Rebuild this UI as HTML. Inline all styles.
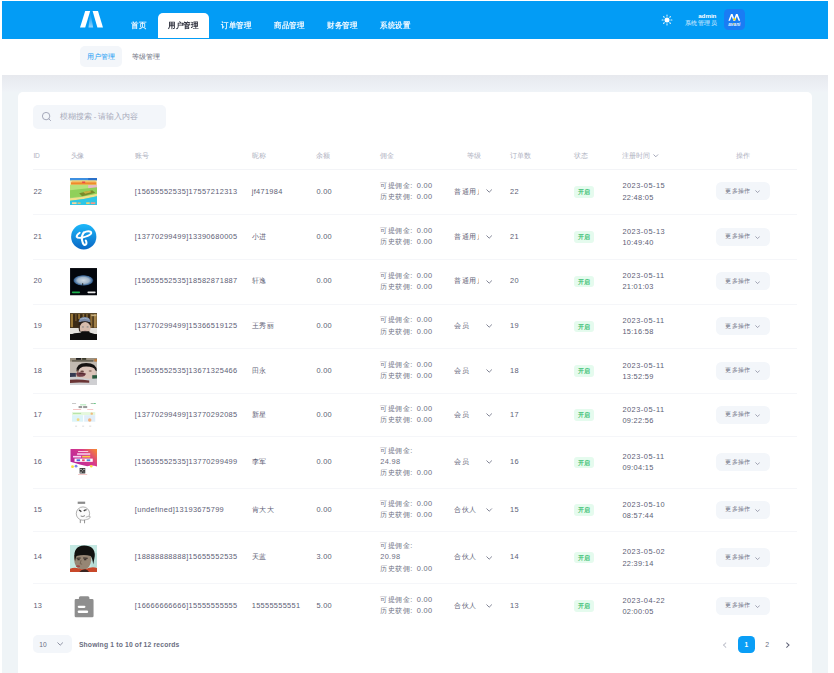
<!DOCTYPE html><html><head><meta charset="utf-8"><style>
*{box-sizing:border-box;margin:0;padding:0}
html,body{width:834px;height:673px;overflow:hidden;background:#fff}
body{font-family:"Liberation Sans",sans-serif;position:relative;color:#5b5e72}
.abs{position:absolute}
#hdr{position:absolute;left:2px;top:1px;width:826px;height:37.5px;background:#039cf5}
.tab{position:absolute;top:21.8px;font-size:8px;letter-spacing:0px;transform:scaleX(0.94);transform-origin:0 0;line-height:8px;color:#eaf6ff;font-weight:bold;white-space:nowrap}
#acttab{position:absolute;left:158px;top:12.6px;width:50.8px;height:25.9px;background:#fff;border-radius:5px 5px 0 0}
#gray{position:absolute;left:2px;top:75px;width:825.7px;height:598px;background:#eff4f7}
#grayshade{position:absolute;left:2px;top:75px;width:825.7px;height:17px;background:linear-gradient(#e7e9ee,#ebeef3 50%,#eff3f7)}
#card{position:absolute;left:17.8px;top:91.7px;width:794.2px;height:600px;background:#fff;border-radius:5px}
.sm{font-size:7px;line-height:10.5px;white-space:nowrap}
.th{position:absolute;top:151px;font-size:6.6px;line-height:10px;color:#afb2bf;white-space:nowrap;letter-spacing:-0.15px}
.row{position:absolute;left:33px;width:764px;border-top:0.6px solid #f5f6f9}
.cell{position:absolute;top:-0.8px;height:100%;display:flex;align-items:center;font-size:7.4px;line-height:11.1px;color:#5d6075;white-space:nowrap;letter-spacing:0.3px}
.cj{letter-spacing:0.5px;font-size:7px}
.chv{position:absolute;overflow:visible}
.av{position:absolute;left:37.2px;width:27.3px;height:27.3px;overflow:hidden}
.badge{position:relative;top:0.8px;display:inline-block;background:#e5fbee;color:#3cbf72;font-size:6.2px;line-height:11.4px;height:11.4px;padding:0 3.8px;border-radius:3px;font-weight:bold;letter-spacing:0}
.btn{position:absolute;left:683.2px;width:53.7px;height:18.1px;background:#f3f6fa;border-radius:5.5px;font-size:6.3px;letter-spacing:0.3px;color:#6a6d80;display:flex;align-items:center;padding-left:9.3px;white-space:nowrap}
.chev{display:inline-block;width:3.4px;height:3.4px;border-right:0.8px solid #7c7f92;border-bottom:0.8px solid #7c7f92;transform:rotate(45deg)}
</style></head><body>
<div id="hdr"></div><div id="acttab"></div>
<svg class="abs" style="left:79.6px;top:11.3px" width="23" height="16.6" viewBox="0 0 23 16.6">
  <defs><linearGradient id="lg" x1="0" y1="0" x2="0" y2="1"><stop offset="0" stop-color="#3aaef5" stop-opacity="0.2"/><stop offset="1" stop-color="#9ad6fb"/></linearGradient></defs>
  <path d="M5.2 0 H10.2 L5.2 16.5 H0 Z" fill="#fff"/>
  <path d="M12.6 0 H18 L23 16.5 H17.4 Z" fill="#fff"/>
  <path d="M10.4 1.5 Q11.8 9 13.2 16.5 H8.5 Q9.2 9 10.4 1.5Z" fill="url(#lg)"/>
</svg>
<div class="tab" style="left:130.7px">首页</div>
<div class="tab" style="left:168px;color:#2b2d3a">用户管理</div>
<div class="tab" style="left:220.5px">订单管理</div>
<div class="tab" style="left:273.8px">商品管理</div>
<div class="tab" style="left:326.8px">财务管理</div>
<div class="tab" style="left:379.9px">系统设置</div>
<svg class="abs" style="left:661.4px;top:13.5px" width="12" height="12" viewBox="0 0 12 12"><circle cx="6" cy="6" r="2.5" fill="#fff"/><g stroke="#fff" stroke-width="1.1" stroke-linecap="round" opacity="0.85"><line x1="9.90" y1="6.00" x2="10.90" y2="6.00"/><line x1="8.76" y1="8.76" x2="9.46" y2="9.46"/><line x1="6.00" y1="9.90" x2="6.00" y2="10.90"/><line x1="3.24" y1="8.76" x2="2.54" y2="9.46"/><line x1="2.10" y1="6.00" x2="1.10" y2="6.00"/><line x1="3.24" y1="3.24" x2="2.54" y2="2.54"/><line x1="6.00" y1="2.10" x2="6.00" y2="1.10"/><line x1="8.76" y1="3.24" x2="9.46" y2="2.54"/></g></svg>
<div class="abs" style="left:670px;width:46.4px;top:12.7px;text-align:right;color:#fff;font-size:6.2px;line-height:6px;font-weight:bold">admin</div>
<div class="abs" style="left:670px;width:47px;top:18.6px;text-align:right;color:#e6f4ff;font-size:6.4px;line-height:7px;letter-spacing:0.45px;margin-right:-0.45px">系统管理员</div>
<div class="abs" style="left:724.4px;top:9.1px;width:20.6px;height:20.8px;background:#1a7cf4;border-radius:4.5px;overflow:hidden">
<svg width="20.6" height="20.8" viewBox="0 0 20.6 20.8"><path d="M4.4 11.8 L7.0 5.0 L8.6 5.0 L10.9 11.8 L9.4 11.8 L7.7 7.2 L6.0 11.8Z" fill="#fff"/><path d="M9.6 11.8 L12.0 5.0 L13.6 5.0 L16.2 11.8 L14.6 11.8 L12.8 7.2 L11.2 11.8Z" fill="#fff"/><circle cx="10.4" cy="10.3" r="1.3" fill="#f2d21c"/><text x="10.3" y="17.1" font-family="Liberation Sans" font-size="4.6" font-weight="bold" font-style="italic" text-anchor="middle" fill="#eef5ff" letter-spacing="0.1">avani</text><circle cx="9.6" cy="14.9" r="0.6" fill="#f2d21c"/></svg></div>
<div class="abs" style="left:79.5px;top:45.9px;width:42px;height:21.1px;background:#f3f6fa;border-radius:5px"></div>
<div class="abs sm" style="left:86.5px;top:52.3px;color:#1c9cf4">用户管理</div>
<div class="abs sm" style="left:131.7px;top:52.3px;color:#6b6e7e">等级管理</div>
<div id="gray"></div><div id="grayshade"></div><div id="card"></div>
<div class="abs" style="left:33.2px;top:105px;width:132.6px;height:23.8px;background:#f3f6fa;border-radius:5px"></div>
<svg class="abs" style="left:40.5px;top:111.2px" width="11" height="11" viewBox="0 0 11 11">
  <circle cx="5.1" cy="5.1" r="3.7" fill="none" stroke="#9c9fb2" stroke-width="0.9"/>
  <line x1="7.9" y1="7.9" x2="9.6" y2="9.6" stroke="#9c9fb2" stroke-width="0.9" stroke-linecap="round"/>
</svg>
<div class="abs sm" style="left:59.7px;top:112px;color:#a8abba;font-size:7.5px">模糊搜索 - 请输入内容</div>
<div class="th" style="left:33.4px">ID</div>
<div class="th" style="left:70.6px">头像</div>
<div class="th" style="left:134.8px">账号</div>
<div class="th" style="left:251.8px">昵称</div>
<div class="th" style="left:316.4px">余额</div>
<div class="th" style="left:380.3px">佣金</div>
<div class="th" style="left:467.4px">等级</div>
<div class="th" style="left:510.1px">订单数</div>
<div class="th" style="left:574px">状态</div>
<div class="th" style="left:622.4px">注册时间<svg style="position:relative;top:-0.9px;left:3.6px" width="5.6" height="3.4" viewBox="0 0 5.6 3.4"><polyline points="0.5,0.5 2.8,2.8 5.1,0.5" fill="none" stroke="#9fa2b4" stroke-width="0.95"/></svg></div>
<div class="th" style="left:736.3px">操作</div>
<div class="abs" style="left:33px;top:169.1px;width:764px;height:0.6px;background:#f3f4f7"></div>
<div class="row" style="top:169.5px;height:44.7px;border-top:none;"><div class="cell" style="left:0.4px">22</div><div class="av" style="top:8.7px;filter:blur(0.3px)"><svg width="27.3" height="27.3" viewBox="0 0 27 27"><g>
<rect width="27" height="27" fill="#9ad36a"/>
<rect width="27" height="2.6" fill="#3d8fe0"/><rect x="18" y="0" width="9" height="2.6" fill="#2a6fc8"/>
<rect y="2.4" width="27" height="4.4" fill="#f7e7b0"/>
<rect x="1.5" y="2.6" width="24" height="1.6" fill="#f2c46a"/>
<rect x="1" y="4.2" width="25" height="2.4" fill="#ef8a2a"/>
<rect x="12" y="3.5" width="3" height="1.5" fill="#e84a4a"/>
<rect y="6.8" width="27" height="7" fill="#b7e27a"/>
<rect x="18" y="7" width="9" height="5" fill="#e9b8c8"/>
<path d="M0 12 L27 9 L27 17 L0 19Z" fill="#8fd05a"/>
<path d="M9 15 L22 12 L25 14.5 L12 18Z" fill="#7a8a2a"/>
<path d="M13 13.5 L20 12.5 L21 14 L15 15.5Z" fill="#c8b040"/>
<path d="M0 20 Q13 19 27 15.5 L27 18 Q13 21.5 0 22.5Z" fill="#f0e08a"/>
<path d="M0 22.5 Q13 21.5 27 18 L27 27 L0 27Z" fill="#2ec6e6"/>
<rect x="2" y="24" width="4.5" height="1.8" fill="#f5d9a0"/><rect x="7.5" y="24.2" width="3" height="1.4" fill="#e8c070"/>
<rect x="16" y="24" width="3.5" height="1.8" fill="#f0d070"/><rect x="20.5" y="24" width="4.5" height="1.8" fill="#f29a8a"/>
</g></svg></div><div class="cell" style="left:101.8px;letter-spacing:0.34px">[15655552535]17557212313</div><div class="cell" style="left:218.8px">jf471984</div><div class="cell" style="left:283.4px">0.00</div><div class="cell" style="left:347.3px;color:#6c6f82"><div><span class="cj">可提佣金</span><span style="margin-right:4.1px">:</span>0.00<br><span class="cj">历史获佣</span><span style="margin-right:4.1px">:</span>0.00</div></div><div class="cell cj" style="left:421.3px;width:24.6px;overflow:hidden">普通用户</div><svg class="chv" style="left:452.6px;top:19.8px" width="6.4" height="3.8" viewBox="0 0 6.4 3.8"><polyline points="0.5,0.5 3.2,3.2 5.9,0.5" fill="none" stroke="#74778a" stroke-width="0.9"/></svg><div class="cell" style="left:477.1px">22</div><div class="cell" style="left:541.1px"><span class="badge">开启</span></div><div class="cell" style="left:589.4px;top:-0.3px"><div><span style="letter-spacing:0.5px">2023-05-15</span><br>22:48:05</div></div><div class="btn" style="top:12.6px">更多操作<svg style="margin-left:4.3px;margin-top:1.8px" width="5.2" height="3.2" viewBox="0 0 5.2 3.2"><polyline points="0.45,0.45 2.6,2.6 4.75,0.45" fill="none" stroke="#8a8da0" stroke-width="0.8"/></svg></div></div>
<div class="row" style="top:214.2px;height:44.6px;"><div class="cell" style="left:0.4px">21</div><div class="av" style="top:8.7px"><svg width="27.3" height="27.3" viewBox="0 0 27 27"><defs><linearGradient id="tg" x1="0" y1="0" x2="0" y2="1"><stop offset="0" stop-color="#1cb8fa"/><stop offset="1" stop-color="#0a66c4"/></linearGradient></defs><circle cx="13.6" cy="12.6" r="12.5" fill="url(#tg)"/>
<g fill="none" stroke="#fff" stroke-linecap="round" stroke-linejoin="round">
<path d="M9.6 8.6 Q6.4 10.6 6.6 12.6 Q7.4 14.4 12.4 13.4 Q18.4 12 20.6 9.8 Q21.8 8 19.6 7.4 Q16.6 6.8 13.6 8.6" stroke-width="1.9"/>
<path d="M13.6 8.6 Q11.2 11.6 11.8 15.6 Q12.4 19.4 14 20.6 Q15.4 21.2 16.2 19.6 Q16.6 18 15.6 16.4" stroke-width="2"/>
</g></svg></div><div class="cell" style="left:101.8px;letter-spacing:0.34px">[13770299499]13390680005</div><div class="cell cj" style="left:218.8px">小进</div><div class="cell" style="left:283.4px">0.00</div><div class="cell" style="left:347.3px;color:#6c6f82"><div><span class="cj">可提佣金</span><span style="margin-right:4.1px">:</span>0.00<br><span class="cj">历史获佣</span><span style="margin-right:4.1px">:</span>0.00</div></div><div class="cell cj" style="left:421.3px;width:24.6px;overflow:hidden">普通用户</div><svg class="chv" style="left:452.6px;top:19.8px" width="6.4" height="3.8" viewBox="0 0 6.4 3.8"><polyline points="0.5,0.5 3.2,3.2 5.9,0.5" fill="none" stroke="#74778a" stroke-width="0.9"/></svg><div class="cell" style="left:477.1px">21</div><div class="cell" style="left:541.1px"><span class="badge">开启</span></div><div class="cell" style="left:589.4px;top:-0.3px"><div><span style="letter-spacing:0.5px">2023-05-13</span><br>10:49:40</div></div><div class="btn" style="top:12.6px">更多操作<svg style="margin-left:4.3px;margin-top:1.8px" width="5.2" height="3.2" viewBox="0 0 5.2 3.2"><polyline points="0.45,0.45 2.6,2.6 4.75,0.45" fill="none" stroke="#8a8da0" stroke-width="0.8"/></svg></div></div>
<div class="row" style="top:258.8px;height:44.7px;"><div class="cell" style="left:0.4px">20</div><div class="av" style="top:8.7px;filter:blur(0.3px)"><svg width="27.3" height="27.3" viewBox="0 0 27 27"><defs><radialGradient id="mg" cx="0.5" cy="0.5" r="0.5"><stop offset="0" stop-color="#d0dae4"/><stop offset="0.55" stop-color="#a2b6ca"/><stop offset="0.85" stop-color="#3a6698"/><stop offset="1" stop-color="#0a1a30" stop-opacity="0"/></radialGradient></defs>
<rect width="27" height="27" fill="#2a2c30"/><rect x="0.4" y="0.4" width="26.2" height="26.2" fill="#03060c"/>
<g><ellipse cx="13.2" cy="12.3" rx="10.5" ry="5.6" fill="url(#mg)"/>
<rect x="12.2" y="15" width="0.8" height="2.4" fill="#101010"/>
<rect x="1.8" y="23.3" width="8.2" height="1.6" rx="0.8" fill="#1eb04c"/><rect x="17.2" y="23.3" width="8.2" height="1.6" rx="0.8" fill="#ececec"/></g></svg></div><div class="cell" style="left:101.8px;letter-spacing:0.34px">[15655552535]18582871887</div><div class="cell cj" style="left:218.8px">轩逸</div><div class="cell" style="left:283.4px">0.00</div><div class="cell" style="left:347.3px;color:#6c6f82"><div><span class="cj">可提佣金</span><span style="margin-right:4.1px">:</span>0.00<br><span class="cj">历史获佣</span><span style="margin-right:4.1px">:</span>0.00</div></div><div class="cell cj" style="left:421.3px;width:24.6px;overflow:hidden">普通用户</div><svg class="chv" style="left:452.6px;top:19.8px" width="6.4" height="3.8" viewBox="0 0 6.4 3.8"><polyline points="0.5,0.5 3.2,3.2 5.9,0.5" fill="none" stroke="#74778a" stroke-width="0.9"/></svg><div class="cell" style="left:477.1px">20</div><div class="cell" style="left:541.1px"><span class="badge">开启</span></div><div class="cell" style="left:589.4px;top:-0.3px"><div><span style="letter-spacing:0.5px">2023-05-11</span><br>21:01:03</div></div><div class="btn" style="top:12.6px">更多操作<svg style="margin-left:4.3px;margin-top:1.8px" width="5.2" height="3.2" viewBox="0 0 5.2 3.2"><polyline points="0.45,0.45 2.6,2.6 4.75,0.45" fill="none" stroke="#8a8da0" stroke-width="0.8"/></svg></div></div>
<div class="row" style="top:303.5px;height:44.6px;"><div class="cell" style="left:0.4px">19</div><div class="av" style="top:8.7px;filter:blur(0.6px)"><svg width="27.3" height="27.3" viewBox="0 0 27 27"><g>
<rect width="27" height="27" fill="#141210"/>
<rect x="0" y="0" width="27" height="14.8" fill="#3a2a16"/>
<rect x="0" y="0" width="27" height="1.2" fill="#5a4a30"/>
<rect x="0.6" y="1" width="2.4" height="13" fill="#9a7838"/><rect x="5" y="1" width="1.6" height="7" fill="#6a5028"/><rect x="8" y="1" width="2" height="5" fill="#8a6a30"/><rect x="12.5" y="1" width="1.6" height="4" fill="#8a7040"/><rect x="16" y="1" width="1.6" height="4" fill="#7a6030"/>
<rect x="20" y="1" width="2.2" height="13.5" fill="#8a6a36"/><rect x="23.5" y="1" width="3" height="13.5" fill="#a08048"/><rect x="21" y="1.5" width="5" height="1.6" fill="#c8b080"/>
<rect x="0" y="14.8" width="27" height="6" fill="#e4e2de"/>
<path d="M8.5 9 Q9 4 14.5 4 Q20 4 20.2 9 Z" fill="#7a8aa6"/>
<path d="M10 6 Q14.5 4.5 19 6.2" stroke="#a8b8cc" stroke-width="0.8" fill="none"/>
<path d="M8.2 12 Q8.2 8.2 14.5 8.2 Q20.8 8.2 20.8 12 Z" fill="#241c18"/>
<ellipse cx="15" cy="14.8" rx="5.4" ry="6" fill="#d6bcac"/>
<path d="M9.8 12 Q9.4 17 11 19 L9 18 Q8.2 15 8.6 12Z" fill="#3a2c24"/>
<ellipse cx="12.8" cy="13.8" rx="1.1" ry="0.6" fill="#8a8a88"/><ellipse cx="17.4" cy="13.8" rx="1.1" ry="0.6" fill="#8a8a88"/>
<ellipse cx="15" cy="17.6" rx="1.5" ry="0.6" fill="#c09a98"/>
<path d="M0 27 L0 21.5 Q4 19.5 10 19.5 Q12 19 11 18 L19 18 Q19 19.5 21 19.8 Q25 20.5 27 23 L27 27Z" fill="#0e0e0e"/>
</g></svg></div><div class="cell" style="left:101.8px;letter-spacing:0.34px">[13770299499]15366519125</div><div class="cell cj" style="left:218.8px">王秀丽</div><div class="cell" style="left:283.4px">0.00</div><div class="cell" style="left:347.3px;color:#6c6f82"><div><span class="cj">可提佣金</span><span style="margin-right:4.1px">:</span>0.00<br><span class="cj">历史获佣</span><span style="margin-right:4.1px">:</span>0.00</div></div><div class="cell cj" style="left:421.3px;width:24.6px;overflow:hidden">会员</div><svg class="chv" style="left:452.6px;top:19.8px" width="6.4" height="3.8" viewBox="0 0 6.4 3.8"><polyline points="0.5,0.5 3.2,3.2 5.9,0.5" fill="none" stroke="#74778a" stroke-width="0.9"/></svg><div class="cell" style="left:477.1px">19</div><div class="cell" style="left:541.1px"><span class="badge">开启</span></div><div class="cell" style="left:589.4px;top:-0.3px"><div><span style="letter-spacing:0.5px">2023-05-11</span><br>15:16:58</div></div><div class="btn" style="top:12.6px">更多操作<svg style="margin-left:4.3px;margin-top:1.8px" width="5.2" height="3.2" viewBox="0 0 5.2 3.2"><polyline points="0.45,0.45 2.6,2.6 4.75,0.45" fill="none" stroke="#8a8da0" stroke-width="0.8"/></svg></div></div>
<div class="row" style="top:348.1px;height:44.6px;"><div class="cell" style="left:0.4px">18</div><div class="av" style="top:8.6px;filter:blur(0.65px)"><svg width="27.3" height="27.3" viewBox="0 0 27 27"><g>
<rect x="-2" y="-2" width="31" height="31" fill="#c2bab2"/>
<rect x="-2" y="-2" width="31" height="5.5" fill="#9a9080"/><rect x="6" y="0" width="5" height="1.8" fill="#222"/><rect x="12" y="0" width="4" height="1.8" fill="#3a3a2a"/><rect x="24" y="1" width="3" height="2.5" fill="#c07a3a"/>
<rect x="2" y="2" width="21" height="1.6" fill="#6a6458"/>
<ellipse cx="16" cy="14" rx="9.4" ry="8.6" fill="#dcc4ba"/>
<path d="M6.5 13 Q6 5 16 5 Q26.5 5 26.5 13 L25 12 Q24 8.5 16 8.5 Q8.5 8.5 8 14Z" fill="#161212"/>
<path d="M7 11 Q8 16 11 19 L7 19Z" fill="#a87868"/>
<ellipse cx="12" cy="13.2" rx="1.8" ry="0.9" fill="#6a4a44"/><ellipse cx="20" cy="12.8" rx="1.6" ry="0.8" fill="#8a6a60"/>
<path d="M6 14.8 Q11 13.2 16 15.6 Q15 18.2 12 18.6 Q8.5 18.6 6.5 17Z" fill="#74404a"/><path d="M9 15.5 Q12 14.8 14.5 16" stroke="#4a2028" stroke-width="0.8" fill="none"/>
<rect x="-2" y="14.8" width="7.8" height="4" fill="#343a52"/>
<rect x="22" y="17" width="7" height="3.6" fill="#2a5a40"/>
<path d="M-2 29 L-2 19 Q8 18 14 20 Q20 21 29 20 L29 29Z" fill="#cfcfd2"/>
<path d="M-2 21.8 Q8 20.8 19 22.2 L19 24.6 Q8 23.8 -2 24.8Z" fill="#6a3434"/>
</g></svg></div><div class="cell" style="left:101.8px;letter-spacing:0.34px">[15655552535]13671325466</div><div class="cell cj" style="left:218.8px">田永</div><div class="cell" style="left:283.4px">0.00</div><div class="cell" style="left:347.3px;color:#6c6f82"><div><span class="cj">可提佣金</span><span style="margin-right:4.1px">:</span>0.00<br><span class="cj">历史获佣</span><span style="margin-right:4.1px">:</span>0.00</div></div><div class="cell cj" style="left:421.3px;width:24.6px;overflow:hidden">会员</div><svg class="chv" style="left:452.6px;top:19.8px" width="6.4" height="3.8" viewBox="0 0 6.4 3.8"><polyline points="0.5,0.5 3.2,3.2 5.9,0.5" fill="none" stroke="#74778a" stroke-width="0.9"/></svg><div class="cell" style="left:477.1px">18</div><div class="cell" style="left:541.1px"><span class="badge">开启</span></div><div class="cell" style="left:589.4px;top:-0.3px"><div><span style="letter-spacing:0.5px">2023-05-11</span><br>13:52:59</div></div><div class="btn" style="top:12.5px">更多操作<svg style="margin-left:4.3px;margin-top:1.8px" width="5.2" height="3.2" viewBox="0 0 5.2 3.2"><polyline points="0.45,0.45 2.6,2.6 4.75,0.45" fill="none" stroke="#8a8da0" stroke-width="0.8"/></svg></div></div>
<div class="row" style="top:392.7px;height:43.5px;"><div class="cell" style="left:0.4px">17</div><div class="av" style="top:8.1px;filter:blur(0.35px)"><svg width="27.3" height="27.3" viewBox="0 0 27 27"><g>
<rect width="27" height="27" fill="#fff"/>
<rect x="2" y="1.2" width="4" height="0.8" fill="#bbb"/><rect x="20.5" y="1" width="3" height="1" fill="#b0c0b0"/><rect x="23.5" y="1" width="2" height="1" fill="#6aca8a"/>
<rect x="10" y="2.4" width="6" height="0.9" fill="#a0e0a8"/>
<rect x="8.5" y="4" width="3.5" height="2" fill="#999"/><rect x="13" y="4" width="4" height="2" fill="#999"/>
<rect x="3" y="7" width="8" height="0.9" fill="#f4c0c0"/><rect x="17" y="7" width="6" height="0.9" fill="#f4c4c4"/>
<rect x="2" y="10" width="23" height="3" fill="#e4f8dc"/><rect x="3" y="10.8" width="8" height="1.1" fill="#b8e4aa"/>
<rect x="2" y="13" width="11" height="6.5" fill="#dcf4f8"/><rect x="14" y="13" width="11" height="6.5" fill="#e0eef8"/>
<circle cx="19.5" cy="17.8" r="1.7" fill="#f6b07a"/><circle cx="8" cy="17.5" r="1.4" fill="#f4d880"/><circle cx="21.5" cy="11.5" r="1.2" fill="#f0b880"/>
<rect x="5" y="23.5" width="2" height="0.7" fill="#ccc"/><rect x="12" y="23.5" width="2" height="0.7" fill="#ccc"/><rect x="19" y="23.5" width="2" height="0.7" fill="#ccc"/>
</g></svg></div><div class="cell" style="left:101.8px;letter-spacing:0.34px">[13770299499]13770292085</div><div class="cell cj" style="left:218.8px">新星</div><div class="cell" style="left:283.4px">0.00</div><div class="cell" style="left:347.3px;color:#6c6f82"><div><span class="cj">可提佣金</span><span style="margin-right:4.1px">:</span>0.00<br><span class="cj">历史获佣</span><span style="margin-right:4.1px">:</span>0.00</div></div><div class="cell cj" style="left:421.3px;width:24.6px;overflow:hidden">会员</div><svg class="chv" style="left:452.6px;top:19.2px" width="6.4" height="3.8" viewBox="0 0 6.4 3.8"><polyline points="0.5,0.5 3.2,3.2 5.9,0.5" fill="none" stroke="#74778a" stroke-width="0.9"/></svg><div class="cell" style="left:477.1px">17</div><div class="cell" style="left:541.1px"><span class="badge">开启</span></div><div class="cell" style="left:589.4px;top:-0.3px"><div><span style="letter-spacing:0.5px">2023-05-11</span><br>09:22:56</div></div><div class="btn" style="top:12.0px">更多操作<svg style="margin-left:4.3px;margin-top:1.8px" width="5.2" height="3.2" viewBox="0 0 5.2 3.2"><polyline points="0.45,0.45 2.6,2.6 4.75,0.45" fill="none" stroke="#8a8da0" stroke-width="0.8"/></svg></div></div>
<div class="row" style="top:436.2px;height:51.7px;"><div class="cell" style="left:0.4px">16</div><div class="av" style="top:12.2px;filter:blur(0.3px)"><svg width="27.3" height="27.3" viewBox="0 0 27 27"><defs><linearGradient id="pg" x1="0" y1="0.6" x2="1" y2="0"><stop offset="0" stop-color="#b8269a"/><stop offset="0.55" stop-color="#d83a8a"/><stop offset="1" stop-color="#f8902a"/></linearGradient></defs><g>
<rect width="27" height="27" fill="#fff"/>
<path d="M0.5 0 H27 V17.5 Q22 15.5 17 17 Q9 15 4 13.5 Q2 13 0.5 12.5Z" fill="url(#pg)"/>
<rect x="8" y="2" width="10" height="1" fill="#f8d0e0"/>
<rect x="7" y="4" width="13" height="2" fill="#f0b0d8"/>
<rect x="3" y="6.8" width="8" height="1.6" fill="#f8d8f0"/><rect x="12" y="6.8" width="8" height="1.6" fill="#f8d040"/>
<rect x="4.5" y="9.5" width="18" height="3.2" fill="#fff"/>
<rect x="6.5" y="10.2" width="3.5" height="1.8" fill="#4a6ad8"/><rect x="12" y="10.2" width="2.5" height="1.8" fill="#e84a6a"/><rect x="16.5" y="10.2" width="3.5" height="1.8" fill="#4a8ad8"/>
<circle cx="2.5" cy="17.5" r="1.4" fill="#f8e040"/><circle cx="6" cy="17" r="1.4" fill="#7a8ae8"/><circle cx="21" cy="17" r="1.2" fill="#f8e040"/>
<rect x="9.5" y="18.8" width="5.6" height="5.4" fill="#3a3a3a"/><rect x="10.3" y="19.6" width="1.2" height="1.2" fill="#ddd"/><rect x="13.2" y="19.6" width="1.2" height="1.2" fill="#ddd"/><rect x="10.3" y="22.4" width="1.2" height="1.2" fill="#ddd"/><rect x="12" y="21" width="1" height="1" fill="#bbb"/><rect x="13.4" y="22.4" width="0.8" height="0.8" fill="#bbb"/>
<rect x="8" y="25" width="9" height="0.7" fill="#f0b0b0"/>
</g></svg></div><div class="cell" style="left:101.8px;letter-spacing:0.34px">[15655552535]13770299499</div><div class="cell cj" style="left:218.8px">李军</div><div class="cell" style="left:283.4px">0.00</div><div class="cell" style="left:347.3px;color:#6c6f82"><div><span class="cj">可提佣金</span><span style="margin-right:4.1px">:</span><br>24.98<br><span class="cj">历史获佣</span><span style="margin-right:4.1px">:</span>0.00</div></div><div class="cell cj" style="left:421.3px;width:24.6px;overflow:hidden">会员</div><svg class="chv" style="left:452.6px;top:23.3px" width="6.4" height="3.8" viewBox="0 0 6.4 3.8"><polyline points="0.5,0.5 3.2,3.2 5.9,0.5" fill="none" stroke="#74778a" stroke-width="0.9"/></svg><div class="cell" style="left:477.1px">16</div><div class="cell" style="left:541.1px"><span class="badge">开启</span></div><div class="cell" style="left:589.4px;top:-0.3px"><div><span style="letter-spacing:0.5px">2023-05-11</span><br>09:04:15</div></div><div class="btn" style="top:16.1px">更多操作<svg style="margin-left:4.3px;margin-top:1.8px" width="5.2" height="3.2" viewBox="0 0 5.2 3.2"><polyline points="0.45,0.45 2.6,2.6 4.75,0.45" fill="none" stroke="#8a8da0" stroke-width="0.8"/></svg></div></div>
<div class="row" style="top:487.9px;height:43.4px;"><div class="cell" style="left:0.4px">15</div><div class="av" style="top:8.0px;filter:blur(0.25px)"><svg width="27.3" height="27.3" viewBox="0 0 27 27"><g>
<rect width="27" height="27" fill="#fff"/>
<rect x="7.6" y="4.6" width="7.4" height="2.2" fill="#777" opacity="0.85"/>
<circle cx="12.8" cy="16.4" r="6.6" fill="#fbfbfb" stroke="#808080" stroke-width="0.6"/>
<path d="M8.8 13 Q10 13.2 11.2 14.6" stroke="#444" stroke-width="1.3" fill="none"/>
<path d="M13.6 13.8 Q15 12.6 16.4 12.8" stroke="#444" stroke-width="1.3" fill="none"/>
<path d="M10.6 18.8 Q12.8 20 14.8 18.4" fill="none" stroke="#555" stroke-width="0.7"/>
<path d="M15.6 20 Q18.6 18.4 20.2 19.6 Q19.6 22 16.2 22.4" fill="#fafafa" stroke="#808080" stroke-width="0.55"/>
<path d="M10.2 22.6 V25.8 M14.4 22.8 V26" stroke="#666" stroke-width="0.7"/>
</g></svg></div><div class="cell" style="left:101.8px;letter-spacing:0.34px">[undefined]13193675799</div><div class="cell cj" style="left:218.8px">肯大大</div><div class="cell" style="left:283.4px">0.00</div><div class="cell" style="left:347.3px;color:#6c6f82"><div><span class="cj">可提佣金</span><span style="margin-right:4.1px">:</span>0.00<br><span class="cj">历史获佣</span><span style="margin-right:4.1px">:</span>0.00</div></div><div class="cell cj" style="left:421.3px;width:24.6px;overflow:hidden">合伙人</div><svg class="chv" style="left:452.6px;top:19.2px" width="6.4" height="3.8" viewBox="0 0 6.4 3.8"><polyline points="0.5,0.5 3.2,3.2 5.9,0.5" fill="none" stroke="#74778a" stroke-width="0.9"/></svg><div class="cell" style="left:477.1px">15</div><div class="cell" style="left:541.1px"><span class="badge">开启</span></div><div class="cell" style="left:589.4px;top:-0.3px"><div><span style="letter-spacing:0.5px">2023-05-10</span><br>08:57:44</div></div><div class="btn" style="top:11.9px">更多操作<svg style="margin-left:4.3px;margin-top:1.8px" width="5.2" height="3.2" viewBox="0 0 5.2 3.2"><polyline points="0.45,0.45 2.6,2.6 4.75,0.45" fill="none" stroke="#8a8da0" stroke-width="0.8"/></svg></div></div>
<div class="row" style="top:531.3px;height:52.0px;"><div class="cell" style="left:0.4px">14</div><div class="av" style="top:12.3px;filter:blur(0.6px)"><svg width="27.3" height="27.3" viewBox="0 0 27 27"><g>
<rect width="27" height="27" fill="#c4e8e2"/>
<rect x="21" y="8" width="6" height="14" fill="#b6dcd6"/>
<path d="M4 12 Q4 24 13 24.5 Q20 24 21 15 L21 10 L4 10Z" fill="#968674"/>
<path d="M4.5 13 Q3 1 14 0.5 Q25 0.5 24.5 11 L23 19 Q22 13 20.5 11 Q14 9 6.5 11 Q5.5 13 5 16Z" fill="#121210"/>
<path d="M6.5 13.2 L10.5 12.8 M13 12.8 L17.5 13" stroke="#2a2420" stroke-width="1"/>
<ellipse cx="8.5" cy="14.5" rx="1.4" ry="0.6" fill="#3a302a"/><ellipse cx="15" cy="14.5" rx="1.4" ry="0.6" fill="#3a302a"/>
<path d="M11 15 L10 18.5 L12 19" stroke="#6a5a4a" stroke-width="0.8" fill="none"/>
<ellipse cx="8" cy="21" rx="2" ry="0.9" fill="#a04a48"/>
<path d="M0 27 L0 23.5 Q4 22 8 23 L11 24 Q15 24.5 19 22.5 Q24 21.5 27 23 L27 27Z" fill="#c8482a"/>
<path d="M9 27 Q11 24 15 24 Q18 24.5 19 27Z" fill="#3a2420"/>
</g></svg></div><div class="cell" style="left:101.8px;letter-spacing:0.34px">[18888888888]15655552535</div><div class="cell cj" style="left:218.8px">天蓝</div><div class="cell" style="left:283.4px">3.00</div><div class="cell" style="left:347.3px;color:#6c6f82"><div><span class="cj">可提佣金</span><span style="margin-right:4.1px">:</span><br>20.98<br><span class="cj">历史获佣</span><span style="margin-right:4.1px">:</span>0.00</div></div><div class="cell cj" style="left:421.3px;width:24.6px;overflow:hidden">合伙人</div><svg class="chv" style="left:452.6px;top:23.5px" width="6.4" height="3.8" viewBox="0 0 6.4 3.8"><polyline points="0.5,0.5 3.2,3.2 5.9,0.5" fill="none" stroke="#74778a" stroke-width="0.9"/></svg><div class="cell" style="left:477.1px">14</div><div class="cell" style="left:541.1px"><span class="badge">开启</span></div><div class="cell" style="left:589.4px;top:-0.3px"><div><span style="letter-spacing:0.5px">2023-05-02</span><br>22:39:14</div></div><div class="btn" style="top:16.2px">更多操作<svg style="margin-left:4.3px;margin-top:1.8px" width="5.2" height="3.2" viewBox="0 0 5.2 3.2"><polyline points="0.45,0.45 2.6,2.6 4.75,0.45" fill="none" stroke="#8a8da0" stroke-width="0.8"/></svg></div></div>
<div class="row" style="top:583.3px;height:44.4px;"><div class="cell" style="left:0.4px">13</div><div class="av" style="top:8.6px"><svg width="27.3" height="27.3" viewBox="0 0 27 27"><rect width="27" height="27" fill="#fff"/>
<path d="M4.6 7.3 Q4.6 6 5.9 6 H8.8 V4.8 Q8.8 3.3 10.3 3.3 H17.7 Q19.2 3.3 19.2 4.8 V6 H22 Q23.3 6 23.3 7.3 V22.7 Q23.3 24 22 24 H5.9 Q4.6 24 4.6 22.7Z" fill="#8e8e8e"/>
<rect x="7.6" y="12.5" width="7.7" height="2.3" rx="1.15" fill="#fff"/>
<rect x="7.6" y="17.3" width="10.4" height="2.6" rx="1.3" fill="#fff"/></svg></div><div class="cell" style="left:101.8px;letter-spacing:0.34px">[16666666666]15555555555</div><div class="cell" style="left:218.8px">15555555551</div><div class="cell" style="left:283.4px">5.00</div><div class="cell" style="left:347.3px;color:#6c6f82"><div><span class="cj">可提佣金</span><span style="margin-right:4.1px">:</span>0.00<br><span class="cj">历史获佣</span><span style="margin-right:4.1px">:</span>0.00</div></div><div class="cell cj" style="left:421.3px;width:24.6px;overflow:hidden">合伙人</div><svg class="chv" style="left:452.6px;top:19.7px" width="6.4" height="3.8" viewBox="0 0 6.4 3.8"><polyline points="0.5,0.5 3.2,3.2 5.9,0.5" fill="none" stroke="#74778a" stroke-width="0.9"/></svg><div class="cell" style="left:477.1px">13</div><div class="cell" style="left:541.1px"><span class="badge">开启</span></div><div class="cell" style="left:589.4px;top:-0.3px"><div><span style="letter-spacing:0.5px">2023-04-22</span><br>02:00:05</div></div><div class="btn" style="top:12.5px">更多操作<svg style="margin-left:4.3px;margin-top:1.8px" width="5.2" height="3.2" viewBox="0 0 5.2 3.2"><polyline points="0.45,0.45 2.6,2.6 4.75,0.45" fill="none" stroke="#8a8da0" stroke-width="0.8"/></svg></div></div>
<div class="abs" style="left:33.2px;top:634.9px;width:39px;height:18.5px;background:#f3f6fa;border-radius:5px"></div>
<div class="abs" style="left:39.2px;top:640.1px;font-size:6.6px;line-height:10px;color:#6a6d80;letter-spacing:0.2px">10</div>
<svg class="chv" style="left:57px;top:642.3px" width="6.4" height="3.8" viewBox="0 0 6.4 3.8"><polyline points="0.5,0.5 3.2,3.2 5.9,0.5" fill="none" stroke="#7c7f92" stroke-width="0.85"/></svg>
<div class="abs" style="left:78.9px;top:640.1px;font-size:6.75px;line-height:10px;color:#6a6d80;font-weight:bold;letter-spacing:0.17px;white-space:nowrap">Showing 1 to 10 of 12 records</div>
<span class="abs" style="left:724.3px;top:642.7px;width:3.5px;height:3.5px;border-left:0.9px solid #c2c4ce;border-bottom:0.9px solid #c2c4ce;transform:rotate(45deg)"></span>
<div class="abs" style="left:737.8px;top:636.1px;width:17px;height:16.8px;background:#0a9ef6;border-radius:4.5px;color:#fff;font-size:6.6px;font-weight:bold;line-height:17.6px;text-align:center">1</div>
<div class="abs" style="left:762.2px;top:636.1px;width:10px;height:16.8px;color:#6a6d80;font-size:6.9px;font-weight:normal;line-height:17.6px;text-align:center">2</div>
<span class="abs" style="left:784.8px;top:642.7px;width:3.5px;height:3.5px;border-right:1px solid #5d6075;border-top:1px solid #5d6075;transform:rotate(45deg)"></span>
</body></html>
